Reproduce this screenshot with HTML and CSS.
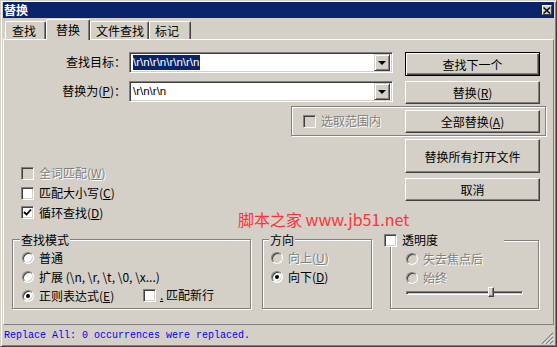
FILE: index.html
```html
<!DOCTYPE html>
<html lang="zh">
<head>
  <meta charset="UTF-8">
  <title>替换</title>
  <link rel="stylesheet" href="styles.css">
</head>
<body>

<div class="window">
  <div class="titlebar">
    <span class="title">替换</span>
    <span class="close-btn">
      <svg width="8" height="7" viewBox="0 0 8 7"><path d="M0.5 0.5 L7 6.5 M7 0.5 L0.5 6.5" stroke="#000" stroke-width="1.4"/></svg>
    </span>
  </div>

  <div class="tabs">
    <div class="tab">查找</div>
    <div class="tab active">替换</div>
    <div class="tab">文件查找</div>
    <div class="tab">标记</div>
  </div>

  <div class="panel">
    <div class="row row-find">
      <label class="field-label">查找目标：</label>
      <div class="combo">
        <span class="combo-text"><span class="selected">\r\n\r\n\r\n\r\n</span></span>
        <span class="drop"><span class="arrow"></span></span>
      </div>
      <button class="btn default">查找下一个</button>
    </div>

    <div class="row row-replace">
      <label class="field-label">替换为(<u>P</u>)：</label>
      <div class="combo">
        <span class="combo-text">\r\n\r\n</span>
        <span class="drop"><span class="arrow"></span></span>
      </div>
      <button class="btn">替换(<u>R</u>)</button>
    </div>

    <div class="scope">
      <div class="check disabled"><span class="box"></span><span class="label">选取范围内</span></div>
      <button class="btn">全部替换(<u>A</u>)</button>
    </div>

    <div class="middle">
      <div class="checks">
        <div class="check disabled"><span class="box"></span><span class="label">全词匹配(<u>W</u>)</span></div>
        <div class="check"><span class="box"></span><span class="label">匹配大小写(<u>C</u>)</span></div>
        <div class="check"><span class="box checked"><svg width="9" height="9" viewBox="0 0 9 9"><path d="M1 4 L3.5 6.5 L8 1.5" fill="none" stroke="#000" stroke-width="1.8"/></svg></span><span class="label">循环查找(<u>D</u>)</span></div>
      </div>
      <div class="side-buttons">
        <button class="btn tall">替换所有打开文件</button>
        <button class="btn">取消</button>
      </div>
    </div>

    <div class="groups">
      <fieldset class="group group-mode">
        <legend>查找模式</legend>
        <div class="radio-row"><span class="radio"></span><span class="label">普通</span></div>
        <div class="radio-row"><span class="radio"></span><span class="label">扩展 (\n, \r, \t, \0, \x...)</span></div>
        <div class="radio-row">
          <span class="radio on"></span><span class="label">正则表达式(<u>E</u>)</span>
          <div class="check newline"><span class="box"></span><span class="label"><u>.</u> 匹配新行</span></div>
        </div>
      </fieldset>

      <fieldset class="group group-dir">
        <legend>方向</legend>
        <div class="radio-row disabled"><span class="radio"></span><span class="label">向上(<u>U</u>)</span></div>
        <div class="radio-row"><span class="radio on"></span><span class="label">向下(<u>D</u>)</span></div>
      </fieldset>

      <fieldset class="group group-trans">
        <legend><span class="check"><span class="box"></span><span class="label">透明度</span></span></legend>
        <div class="radio-row disabled"><span class="radio"></span><span class="label">失去焦点后</span></div>
        <div class="radio-row disabled"><span class="radio"></span><span class="label">始终</span></div>
        <div class="slider"><span class="track"></span><span class="thumb"></span></div>
      </fieldset>
    </div>

    <div class="watermark">脚本之家 www.jb51.net</div>
  </div>

  <div class="statusbar">
    Replace All: 0 occurrences were replaced.
    <svg class="grip" width="13" height="13" viewBox="0 0 13 13">
      <path d="M12 1 L1 12 M12 5 L5 12 M12 9 L9 12" stroke="#808080" stroke-width="1.2"/>
      <path d="M12 2.5 L2.5 12 M12 6.5 L6.5 12 M12 10.5 L10.5 12" stroke="#fff" stroke-width="1"/>
    </svg>
  </div>
</div>

</body>
</html>
```

FILE: styles.css
```css
body {
  margin: 0;
  font-family: "Noto Sans CJK SC", "Liberation Sans", sans-serif;
  font-size: 12px;
  color: #000;
  background-color: #d4d0c8;
}
u {
  text-decoration: underline;
  text-underline-offset: 1px;
}
.window {
  position: relative;
  width: 557px;
  height: 347px;
  box-sizing: border-box;
  padding: 1px 2px 0 2px;
  background-color: #d4d0c8;
  border: 1px solid;
  border-color: #d4d0c8 #404040 #404040 #d4d0c8;
  box-shadow: inset 1px 1px #fff, inset -1px -1px #808080;
}
.titlebar {
  height: 16px;
  background-color: #0a246a;
  display: flex;
  align-items: center;
  justify-content: space-between;
  padding: 0 2px 0 1px;
}
.title {
  color: #fff;
  font-weight: bold;
  font-size: 12px;
  line-height: 14px;
}
.close-btn {
  width: 10px;
  height: 10px;
  background-color: #d4d0c8;
  box-sizing: border-box;
  border: 1px solid;
  border-color: #fff #404040 #404040 #fff;
  display: flex;
  align-items: center;
  justify-content: center;
}
.tabs {
  height: 21px;
  display: flex;
  align-items: flex-end;
  padding-left: 2px;
}
.tab {
  position: relative;
  height: 18px;
  box-sizing: border-box;
  border-top: 1px solid #fff;
  border-left: 1px solid #fff;
  border-right: 1px solid #404040;
  box-shadow: inset -1px 0 #808080;
  border-radius: 2px 2px 0 0;
  padding: 1px 0 0 6px;
  line-height: 15px;
}
.tab:nth-child(1) { width: 41px; }
.tab:nth-child(2) { width: 44px; }
.tab:nth-child(3) { width: 59px; padding-left: 5px; }
.tab:nth-child(4) { width: 42px; padding-left: 5px; }
.tab.active {
  height: 21px;
  margin-bottom: -1px;
  z-index: 2;
  background-color: #d4d0c8;
  padding-top: 2px;
  padding-left: 9px;
}
.panel {
  position: relative;
  height: 286px;
  box-sizing: border-box;
  border-top: 1px solid #fff;
  border-left: 1px solid #fff;
  border-right: 1px solid #808080;
  border-bottom: 1px solid #808080;
}
.row {
  display: flex;
  align-items: flex-start;
}
.row-find {
  margin-top: 12px;
  height: 24px;
}
.row-replace {
  margin-top: 5px;
  height: 23px;
}
.field-label {
  width: 122px;
  text-align: right;
  line-height: 20px;
}
.combo {
  margin-left: 3px;
  width: 264px;
  height: 21px;
  box-sizing: border-box;
  background-color: #fff;
  border: 1px solid;
  border-color: #808080 #fff #fff #808080;
  box-shadow: inset 1px 1px #404040, inset -1px -1px #d4d0c8;
  display: flex;
  align-items: center;
  padding: 0 2px 0 2px;
}
.combo-text {
  flex: 1;
  font-family: "Liberation Sans", sans-serif;
  font-size: 11.5px;
  line-height: 15px;
  padding-left: 1px;
}
.selected {
  background-color: #0a246a;
  color: #fff;
  display: inline-block;
  padding: 0 1px 0 0;
}
.drop {
  width: 16px;
  height: 17px;
  box-sizing: border-box;
  background-color: #d4d0c8;
  border: 1px solid;
  border-color: #d4d0c8 #404040 #404040 #d4d0c8;
  box-shadow: inset 1px 1px #fff, inset -1px -1px #808080;
  display: flex;
  align-items: center;
  justify-content: center;
}
.arrow {
  width: 0;
  height: 0;
  border-left: 4px solid transparent;
  border-right: 4px solid transparent;
  border-top: 4px solid #000;
  margin-top: 1px;
}
.btn {
  font-family: inherit;
  font-size: 12px;
  width: 135px;
  height: 23px;
  padding: 0;
  background-color: #d4d0c8;
  color: #000;
  border: 1px solid;
  border-color: #fff #404040 #404040 #fff;
  box-shadow: inset -1px -1px #808080;
  border-radius: 0;
}
.row .btn {
  margin-left: 12px;
}
.btn.default {
  height: 24px;
  border: 1px solid #000;
  box-shadow: inset 1px 1px #fff, inset -1px -1px #404040, inset -2px -2px #808080;
}
.scope {
  margin: 2px 0 0 287px;
  width: 255px;
  height: 30px;
  box-sizing: border-box;
  border: 1px solid #808080;
  box-shadow: inset 1px 1px #fff, 1px 1px #fff;
  display: flex;
  align-items: center;
  justify-content: space-between;
  padding: 0 5px 0 11px;
}
.check {
  display: flex;
  align-items: center;
  height: 20px;
}
.box {
  width: 13px;
  height: 13px;
  box-sizing: border-box;
  background-color: #fff;
  border: 1px solid;
  border-color: #808080 #fff #fff #808080;
  box-shadow: inset 1px 1px #404040, inset -1px -1px #d4d0c8;
  display: flex;
  align-items: center;
  justify-content: center;
  flex-shrink: 0;
}
.check .label {
  margin-left: 5px;
  line-height: 16px;
}
.check.disabled .box {
  background-color: #d4d0c8;
}
.disabled .label {
  color: #808080;
  text-shadow: 1px 1px #fff;
}
.middle {
  margin-top: 3px;
  height: 88px;
  display: flex;
}
.checks {
  margin-left: 17px;
  padding-top: 24px;
}
.checks .check:nth-child(3) {
  height: 19px;
}
.side-buttons {
  margin-left: auto;
  margin-right: 13px;
  display: flex;
  flex-direction: column;
  gap: 5px;
}
.btn.tall {
  height: 34px;
}
.groups {
  margin-top: 6px;
  display: flex;
}
.group {
  margin: 0;
  height: 76px;
  box-sizing: border-box;
  border: 1px solid #808080;
  box-shadow: inset 1px 1px #fff, 1px 1px #fff;
  padding: 2px 0 0 0;
}
.group legend {
  line-height: 13px;
  padding: 0 1px;
  background-color: #d4d0c8;
}
.group-mode {
  margin-left: 8px;
  width: 239px;
  padding-left: 9px;
}
.group-mode legend {
  margin-left: -2px;
}
.group-dir {
  margin-left: 11px;
  width: 110px;
  padding-left: 8px;
}
.group-dir legend {
  margin-left: -2px;
}
.group-trans {
  margin-left: 18px;
  width: 149px;
  padding-left: 15px;
}
.group-trans legend {
  margin-left: -22px;
  width: 120px;
  padding: 0;
  height: 14px;
}
.group-trans legend .check {
  height: 14px;
}
.radio-row {
  display: flex;
  align-items: center;
  height: 19px;
  position: relative;
}
.radio {
  position: relative;
  width: 12px;
  height: 12px;
  box-sizing: border-box;
  border-radius: 50%;
  border: 1px solid;
  border-color: #808080 #fff #fff #808080;
  box-shadow: inset 1px 1px #404040, inset -1px -1px #d4d0c8;
  background-color: #fff;
  flex-shrink: 0;
}
.radio-row.disabled .radio {
  background-color: #d4d0c8;
}
.radio.on::after {
  content: "";
  position: absolute;
  left: 3px;
  top: 3px;
  width: 4px;
  height: 4px;
  border-radius: 50%;
  background-color: #000;
}
.radio-row .label {
  margin-left: 5px;
  line-height: 16px;
}
.check.newline {
  position: absolute;
  left: 121px;
  top: -1px;
}
.check.newline .label {
  margin-left: 4px;
}
.slider {
  position: relative;
  height: 14px;
}
.track {
  position: absolute;
  left: 0;
  top: 4px;
  width: 117px;
  height: 4px;
  box-sizing: border-box;
  border: 1px solid;
  border-color: #808080 #fff #fff #808080;
  box-shadow: inset 1px 1px #404040;
}
.thumb {
  position: absolute;
  left: 82px;
  top: 0;
  width: 6px;
  height: 10px;
  box-sizing: border-box;
  background-color: #d4d0c8;
  border: 1px solid;
  border-color: #fff #404040 #404040 #fff;
  box-shadow: inset -1px -1px #808080;
}
.watermark {
  position: absolute;
  left: 234px;
  top: 169px;
  color: #ff3333;
  font-size: 16px;
  line-height: 20px;
}
.statusbar {
  position: relative;
  height: 20px;
  font-family: "Liberation Mono", monospace;
  font-size: 10px;
  line-height: 14px;
  color: #0000ff;
  padding: 4px 0 0 1px;
  box-sizing: border-box;
}
.grip {
  position: absolute;
  right: 0;
  bottom: 0;
}
```
